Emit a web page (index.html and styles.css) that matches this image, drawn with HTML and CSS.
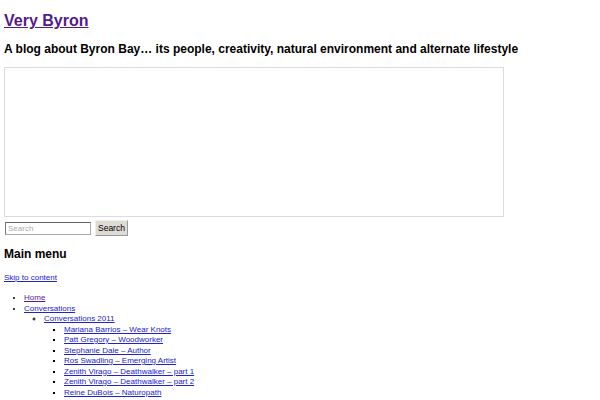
FILE: index.html
```html
<!DOCTYPE html>
<html lang="en">
<head>
    <meta charset="UTF-8">
    <title>Very Byron</title>
    <link rel="stylesheet" href="styles.css">
</head>
<body>
    <div class="header">
        <h1 class="site-title"><a href="#">Very Byron</a></h1>
        <h2 class="site-desc">A blog about Byron Bay&hellip; its people, creativity, natural environment and alternate lifestyle</h2>
        <div class="header-image"></div>
        <form class="searchform">
            <input type="text" class="search-field" placeholder="Search">
            <button type="button" class="search-btn">Search</button>
        </form>
    </div>

    <div class="access">
        <h3 class="menu-title">Main menu</h3>
        <div class="skip"><a href="#">Skip to content</a></div>
        <ul class="menu">
            <li><a href="#" class="visited">Home</a></li>
            <li><a href="#">Conversations</a>
                <ul>
                    <li><a href="#">Conversations 2011</a>
                        <ul>
                            <li><a href="#">Mariana Barrios &ndash; Wear Knots</a></li>
                            <li><a href="#">Patt Gregory &ndash; Woodworker</a></li>
                            <li><a href="#">Stephanie Dale &ndash; Author</a></li>
                            <li><a href="#">Ros Swadling &ndash; Emerging Artist</a></li>
                            <li><a href="#">Zenith Virago &ndash; Deathwalker &ndash; part 1</a></li>
                            <li><a href="#">Zenith Virago &ndash; Deathwalker &ndash; part 2</a></li>
                            <li><a href="#">Reine DuBois &ndash; Naturopath</a></li>
                            <li><a href="#">Adriana Ryan &ndash; Overseas International Student</a></li>
                        </ul>
                    </li>
                </ul>
            </li>
        </ul>
    </div>
</body>
</html>
```

FILE: styles.css
```css
body {
    margin: 4px;
    font-family: "Liberation Sans", Arial, sans-serif;
    color: #000;
    background-color: #fff;
}
a {
    color: #2222cc;
}
a.visited, .site-title a {
    color: #551a8b;
}
.site-title {
    font-size: 16px;
    margin: 8px 0 12px;
}
.site-desc {
    font-size: 12px;
    margin: 0 0 11px;
}
.header-image {
    width: 498px;
    height: 148px;
    border: 1px solid #dcdcdc;
}
.searchform {
    margin: 3px 0 0;
    display: flex;
    align-items: center;
    gap: 4px;
}
.search-field {
    width: 80px;
    height: 9px;
    padding: 1px 2px;
    margin: 0 0 0 1px;
    font-family: inherit;
    font-size: 8px;
    border: 1px solid #aaa;
    border-top-color: #666;
    border-left-color: #777;
}
.search-field::placeholder {
    color: #aaa;
}
.search-btn {
    height: 16px;
    padding: 0 2px;
    font-family: inherit;
    font-size: 8.5px;
    color: #000;
    background-color: #dedbd5;
    border: 1px solid #999;
    border-top-color: #eee;
    border-left-color: #eee;
    border-radius: 0;
}
.menu-title {
    font-size: 12px;
    margin: 11px 0 12px;
}
.skip {
    font-size: 8px;
}
.menu, .menu ul {
    margin: 0;
    padding-left: 20px;
    font-size: 8px;
    line-height: 10.5px;
}
.menu {
    margin-top: 11px;
    list-style-type: disc;
}
.menu ul {
    list-style-type: circle;
}
.menu ul ul {
    list-style-type: square;
}
```
